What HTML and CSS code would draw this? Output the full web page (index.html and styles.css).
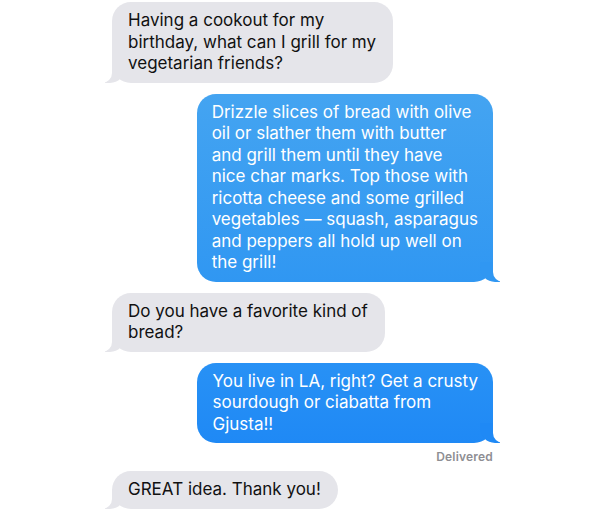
FILE: index.html
```html
<!DOCTYPE html>
<html lang="en">
<head>
<meta charset="UTF-8" />
<meta name="viewport" content="width=device-width, initial-scale=1" />
<title>Messages</title>
<link rel="stylesheet" href="styles.css">
</head>
<body>

<div class="thread">
  <div class="msg received">Having a cookout for my<br>birthday, what can I grill for my<br>vegetarian friends?</div>

  <div class="msg sent first">Drizzle slices of bread with olive<br>oil or slather them with butter<br>and grill them until they have<br>nice char marks. Top those with<br>ricotta cheese and some grilled<br>vegetables — squash, asparagus<br>and peppers all hold up well on<br>the grill!</div>

  <div class="msg received">Do you have a favorite kind of<br>bread?</div>

  <div class="msg sent second">You live in LA, right? Get a crusty<br>sourdough or ciabatta from<br>Gjusta!!</div>
  <div class="status">Delivered</div>

  <div class="msg received">GREAT idea. Thank you!</div>
</div>

</body>
</html>
```

FILE: styles.css
```css
body {
  margin: 0;
  background: #fff;
  font-family: Inter, 'Liberation Sans', sans-serif;
}

.thread {
  width: 606px;
  height: 512px;
  box-sizing: border-box;
  padding: 2px 113px 0 112px;
  display: flex;
  flex-direction: column;
  overflow: hidden;
}

.msg {
  position: relative;
  font-size: 17px;
  line-height: 21.5px;
  padding: 8px 17px 8px 16px;
  border-radius: 19px;
  white-space: nowrap;
  margin-bottom: 11px;
}

.received {
  align-self: flex-start;
  background: #e5e5ea;
  color: #111;
}

.sent {
  align-self: flex-end;
  color: #fff;
  padding: 8px 15px;
}

.sent.first {
  background: linear-gradient(180deg, #44a4f1 0%, #3097f2 100%);
}

.sent.second {
  background: linear-gradient(180deg, #2891f5 0%, #1f89f5 100%);
  margin-bottom: 6px;
}

/* bubble tails */
.msg::before,
.msg::after {
  content: "";
  position: absolute;
  bottom: 0;
  height: 20px;
}

.received::before {
  left: -7px;
  width: 20px;
  background: #e5e5ea;
  border-bottom-right-radius: 15px;
}

.received::after {
  left: -26px;
  width: 26px;
  background: #fff;
  border-bottom-right-radius: 10px;
}

.sent::before {
  right: -7px;
  width: 20px;
  border-bottom-left-radius: 15px;
}

.sent.first::before {
  background: #3097f2;
}

.sent.second::before {
  background: #1f89f5;
}

.sent::after {
  right: -26px;
  width: 26px;
  background: #fff;
  border-bottom-left-radius: 10px;
}

.status {
  align-self: flex-end;
  font-size: 12px;
  font-weight: 600;
  color: #8e8e93;
  margin-bottom: 7px;
  letter-spacing: 0.2px;
}
```
